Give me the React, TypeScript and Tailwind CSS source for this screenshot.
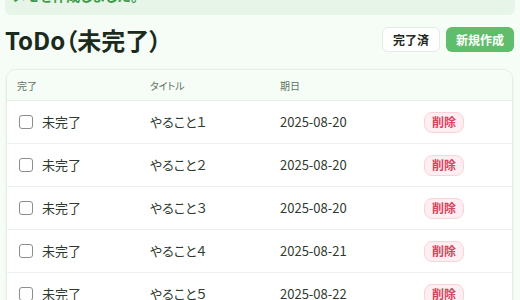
const font = { fontFamily: '"Noto Sans CJK JP", "Noto Sans", sans-serif' };

const todos = [
  { title: "やること１", due: "2025-08-20" },
  { title: "やること２", due: "2025-08-20" },
  { title: "やること３", due: "2025-08-20" },
  { title: "やること４", due: "2025-08-21" },
  { title: "やること５", due: "2025-08-22" },
];

export default function App() {
  return (
    <div
      className="min-h-screen bg-[#f6fcf6] px-[5px] overflow-hidden [font-feature-settings:'palt']"
      style={font}
    >
      <div className="-mt-[25px] rounded-md bg-[#e7f5e9] px-[8px] py-[10px] text-[14px] leading-[20px] font-semibold text-[#3f9c4c]">
        メモを作成しました。
      </div>

      <div className="mt-[12px] flex items-center justify-between">
        <h1 className="text-[24px] font-bold leading-[25px] text-[#1a2b1d]">ToDo（未完了）</h1>
        <div className="flex items-center gap-[6px] pr-[1px]">
          <button className="h-[25px] rounded-md border border-[#e3ece3] bg-white px-[10px] text-[12px] font-bold text-[#1f2a20]">
            完了済
          </button>
          <button className="h-[25px] rounded-md bg-[#60bd6b] px-[10px] text-[12px] font-bold text-white">
            新規作成
          </button>
        </div>
      </div>

      <div className="mt-[17px] ml-[1px] mr-[2px] overflow-hidden rounded-[10px] border border-[#e4eee4] bg-white shadow-[0_1px_3px_rgba(0,0,0,0.06)]">
        <div className="grid h-[31px] grid-cols-[133px_130px_144px_1fr] items-center border-b border-[#e6efe6] bg-[#f6fcf6] px-[10px] text-[10px] text-[#5f7562]">
          <span>完了</span>
          <span>タイトル</span>
          <span>期日</span>
          <span />
        </div>
        {todos.map((t) => (
          <div
            key={t.title}
            className="grid h-[43px] grid-cols-[133px_130px_144px_1fr] items-center border-b border-[#edf2ed] px-[10px] text-[13px] text-[#2e3a30]"
          >
            <div className="flex items-center gap-[9px] pl-[2px]">
              <span className="h-[14px] w-[14px] rounded-[3px] border border-[#8a8f8a] bg-white" />
              <span>未完了</span>
            </div>
            <span>{t.title}</span>
            <span>{t.due}</span>
            <div>
              <button className="h-[21px] rounded-lg border border-[#fad3da] bg-[#fdeef1] px-[7px] text-[12px] font-bold leading-none text-[#d6455e]">
                削除
              </button>
            </div>
          </div>
        ))}
      </div>
    </div>
  );
}
